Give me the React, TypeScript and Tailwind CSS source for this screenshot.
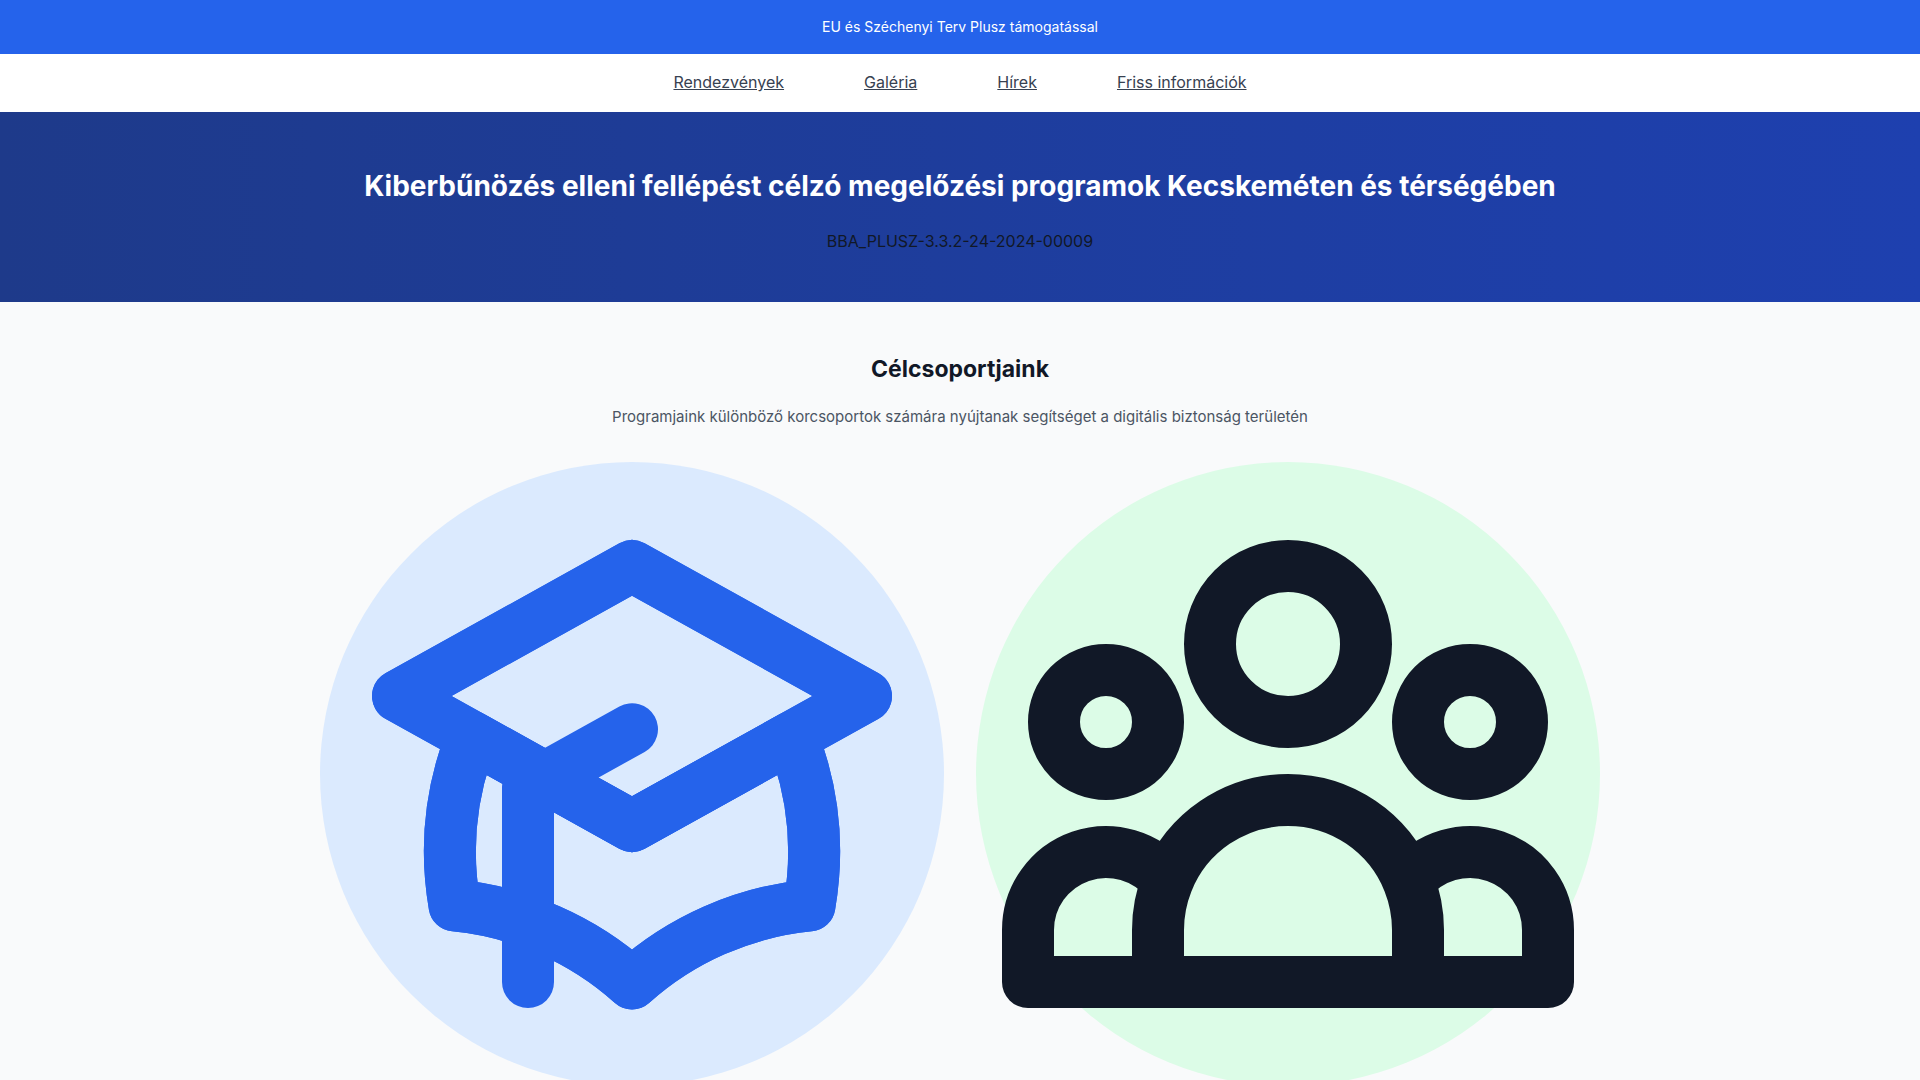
const navItems = [
  { label: "Rendezvények", href: "#rendezvenyek" },
  { label: "Galéria", href: "#galeria" },
  { label: "Hírek", href: "#hirek" },
  { label: "Friss információk", href: "#friss-informaciok" },
];

function GraduationIcon() {
  return (
    <svg
      className="w-full text-[#2563eb]"
      viewBox="0 0 24 24"
      fill="none"
      stroke="currentColor"
      strokeWidth="2"
      strokeLinecap="round"
      strokeLinejoin="round"
      aria-hidden="true"
    >
      <path d="M12 14l9-5-9-5-9 5 9 5z" />
      <path d="M12 14l6.16-3.422a12.083 12.083 0 01.665 6.479A11.952 11.952 0 0012 20.055a11.952 11.952 0 00-6.824-2.998 12.078 12.078 0 01.665-6.479L12 14z" />
      <path d="M12 14l9-5-9-5-9 5 9 5zm0 0l6.16-3.422a12.083 12.083 0 01.665 6.479A11.952 11.952 0 0012 20.055a11.952 11.952 0 00-6.824-2.998 12.078 12.078 0 01.665-6.479L12 14zm-4 6v-7.5l4-2.222" />
    </svg>
  );
}

function GroupIcon() {
  return (
    <svg
      className="w-full text-[#111827]"
      viewBox="0 0 24 24"
      fill="none"
      stroke="currentColor"
      strokeWidth="2"
      strokeLinecap="round"
      strokeLinejoin="round"
      aria-hidden="true"
    >
      <path d="M17 20h5v-2a3 3 0 00-5.356-1.857M17 20H7m10 0v-2c0-.656-.126-1.283-.356-1.857M7 20H2v-2a3 3 0 015.356-1.857M7 20v-2c0-.656.126-1.283.356-1.857m0 0a5.002 5.002 0 019.288 0M15 7a3 3 0 11-6 0 3 3 0 016 0zm6 3a2 2 0 11-4 0 2 2 0 014 0zM7 10a2 2 0 11-4 0 2 2 0 014 0z" />
    </svg>
  );
}

export default function App() {
  return (
    <div className="h-screen overflow-hidden bg-[#f9fafb] font-['Inter',sans-serif] text-base leading-[26px] text-[#111827]">
      <div className="bg-[#2563eb] py-4 text-center text-sm leading-[22px] text-white">
        EU és Széchenyi Terv Plusz támogatással
      </div>
      <nav className="flex justify-center gap-20 bg-white pt-[15px] pb-[17px] text-[#374151]">
        {navItems.map((item) => (
          <a key={item.href} href={item.href} className="underline">
            {item.label}
          </a>
        ))}
      </nav>
      <header className="bg-[linear-gradient(to_right,#1e3a8a,#1e40af)] px-4 py-12 text-center">
        <h1 className="mb-4 text-[28px] leading-[52px] font-bold text-white">
          Kiberbűnözés elleni fellépést célzó megelőzési programok Kecskeméten és térségében
        </h1>
        <p>BBA_PLUSZ-3.3.2-24-2024-00009</p>
      </header>
      <main className="mx-auto max-w-7xl py-12 text-center">
        <h2 className="text-[23px] leading-[38px] font-bold">Célcsoportjaink</h2>
        <p className="mt-4 text-[15px] leading-[26px] text-[#4b5563]">
          Programjaink különböző korcsoportok számára nyújtanak segítséget a digitális biztonság területén
        </p>
        <div className="mt-8 grid grid-cols-2 gap-8">
          <div className="rounded-full bg-[#dbeafe]">
            <GraduationIcon />
          </div>
          <div className="rounded-full bg-[#dcfce7]">
            <GroupIcon />
          </div>
        </div>
      </main>
    </div>
  );
}
